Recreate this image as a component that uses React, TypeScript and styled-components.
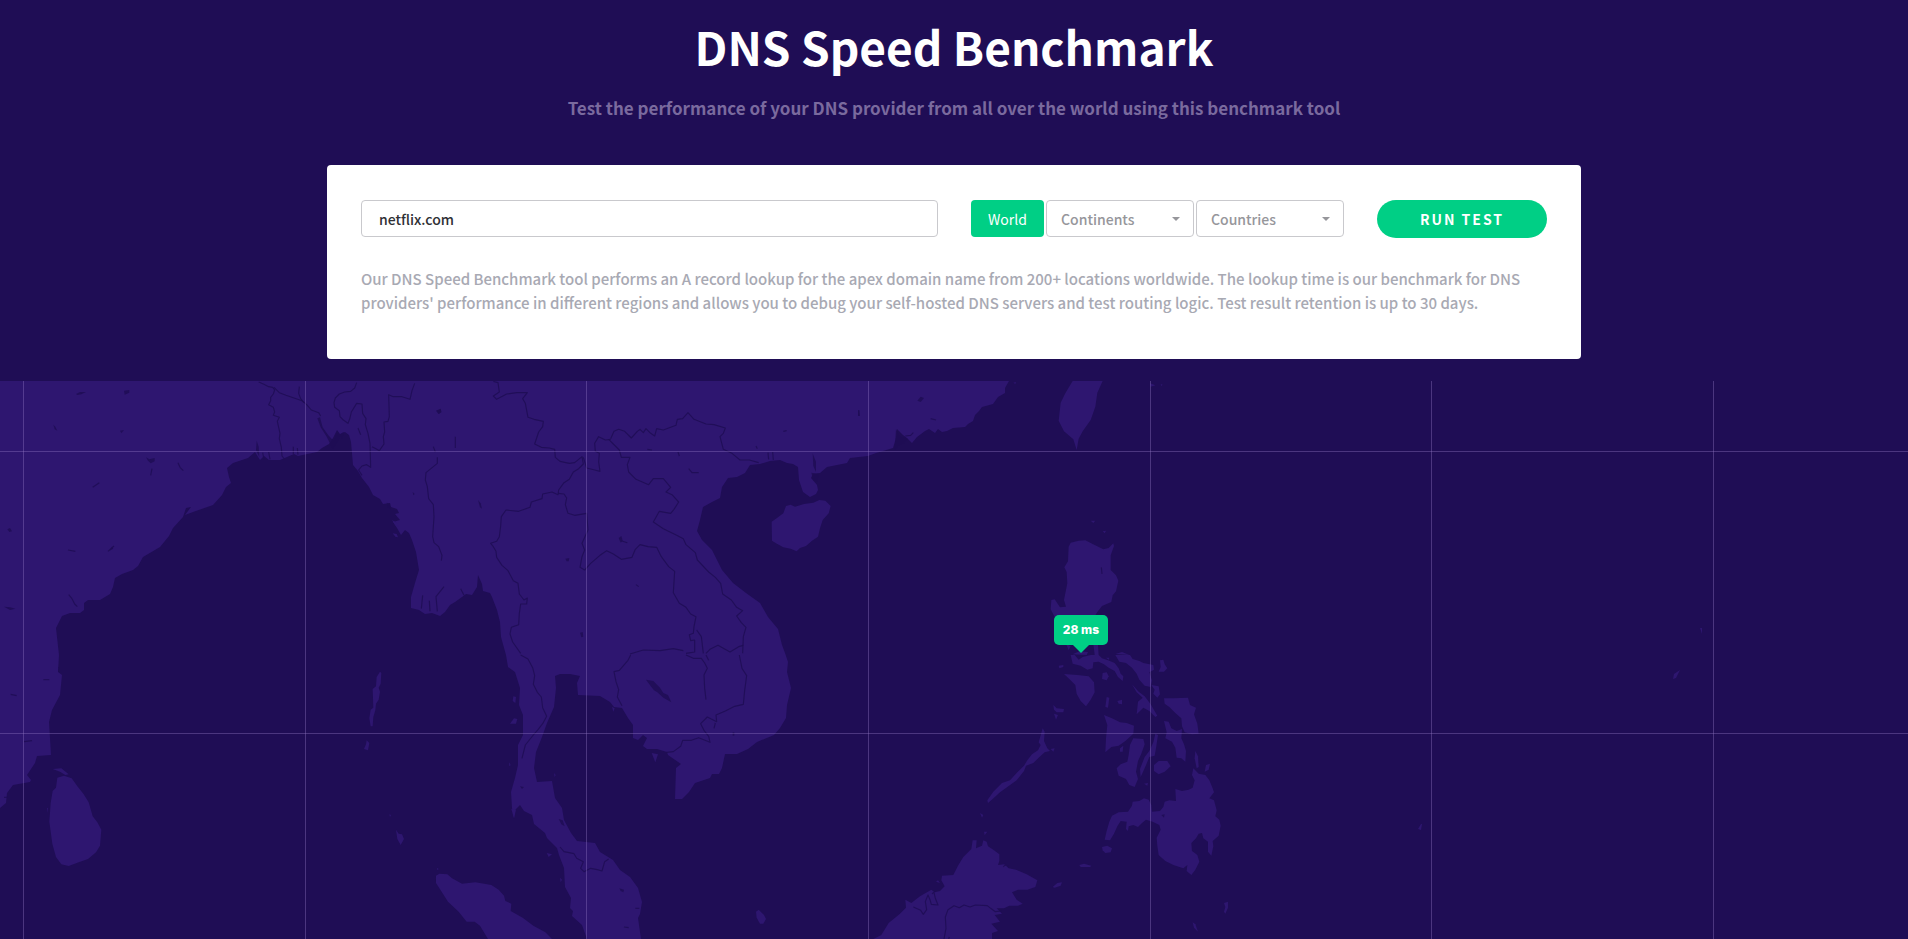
import React from "react";
import styled, { createGlobalStyle } from "styled-components";

const color = {
  sea: "#1f0d55",
  land: "#2e1670",
  grid: "rgba(146, 122, 196, 0.38)",
  green: "#00cf85",
  line: "#c9c9cd",
  muted: "#a8a9b3",
};

const sans = '"Noto Sans CJK SC", "Noto Sans", sans-serif';

const GlobalStyle = createGlobalStyle`
  *, *::before, *::after { box-sizing: border-box; }
  body {
    margin: 0;
    background: ${color.sea};
    font-family: ${sans};
  }
`;

const Page = styled.div`
  display: flex;
  flex-direction: column;
  min-height: 100vh;
  background: ${color.sea};
`;

const Header = styled.header`
  padding: 16px 24px 43px;
  text-align: center;
`;

const Title = styled.h1`
  margin: 0;
  color: #fff;
  font-size: 46px;
  line-height: 60px;
  font-weight: 700;
`;

const Subtitle = styled.p`
  margin: 18px 0 0;
  color: #7a6a9e;
  font-size: 17px;
  line-height: 28px;
  font-weight: 700;
`;

const Card = styled.form`
  width: calc(100% - 48px);
  max-width: 1254px;
  margin: 0 auto 22px;
  padding: 35px 34px 44px;
  border-radius: 4px;
  background: #fff;
`;

const Controls = styled.div`
  display: flex;
  flex-wrap: wrap;
  align-items: flex-start;
  gap: 33px;
`;

const DomainInput = styled.input`
  flex: 1 1 240px;
  min-width: 0;
  height: 37px;
  padding: 0 17px;
  border: 1px solid ${color.line};
  border-radius: 4px;
  background: #fff;
  color: #2f3035;
  font-family: inherit;
  font-size: 14px;
  font-weight: 500;
`;

const Scope = styled.div`
  display: flex;
  gap: 2px;
`;

const ScopeButton = styled.button`
  width: 73px;
  height: 37px;
  padding: 0;
  border: 0;
  border-radius: 4px;
  background: ${color.green};
  color: #fff;
  font-family: inherit;
  font-size: 14px;
  font-weight: 400;
`;

const SelectBox = styled.div`
  position: relative;
  width: 148px;
`;

const Select = styled.select`
  appearance: none;
  width: 100%;
  height: 37px;
  padding: 0 30px 0 14px;
  border: 1px solid ${color.line};
  border-radius: 4px;
  background: #fff;
  color: #96969b;
  font-family: inherit;
  font-size: 14px;
  font-weight: 500;
`;

const Caret = styled.svg`
  position: absolute;
  top: 17px;
  right: 14px;
  width: 8px;
  height: 4px;
  fill: #96969b;
  pointer-events: none;
`;

const RunButton = styled.button`
  width: 170px;
  height: 38px;
  padding: 0;
  border: 0;
  border-radius: 19px;
  background: ${color.green};
  color: #fff;
  font-family: inherit;
  font-size: 14px;
  font-weight: 700;
  letter-spacing: 2px;
`;

const Note = styled.p`
  margin: 29px 0 0;
  color: ${color.muted};
  font-size: 15px;
  line-height: 24px;
  font-weight: 500;
`;

const MapArea = styled.main`
  position: relative;
  flex: 1 0 auto;
  min-height: 558px;
  overflow: hidden;
`;

const MapSvg = styled.svg`
  position: absolute;
  inset: 0;
  width: 100%;
  height: 100%;
`;

const Pin = styled.div`
  position: absolute;
  left: calc(50% + 127px);
  top: 234px;
  width: 54px;
  height: 30px;
  transform: translateX(-50%);
  border-radius: 5px;
  background: ${color.green};
  color: #fff;
  font-family: Inter, sans-serif;
  font-size: 12px;
  line-height: 30px;
  font-weight: 800;
  text-align: center;

  &::after {
    content: "";
    position: absolute;
    left: 50%;
    top: 100%;
    margin-left: -8px;
    border: 8px solid transparent;
    border-bottom: 0;
    border-top-color: ${color.green};
  }
`;

const mainland =
  "0,381 1009,381 1005,388 1005,393 998,397 993,404 982,407 979,411 975,415 973,421 968,424 965,427 953,428 947,431 942,432 938,429 935,433 929,429 925,431 917,437 912,443 907,438 903,435 897,429 896,438 893,448 883,451 876,453 868,456 850,458 847,463 827,467 820,473 813,474 811,478 817,485 818,490 816,494 810,497 803,492 799,480 798,467 793,464 787,463 780,460 770,461 760,464 750,465 745,473 737,477 728,478 722,487 720,498 712,502 703,507 700,520 697,531 702,540 712,550 718,562 722,570 733,583 746,593 760,603 768,617 778,629 782,645 785,653 788,662 787,672 791,688 787,705 786,718 780,728 774,735 757,742 748,749 737,754 725,754 722,768 719,774 712,774 710,778 695,783 689,792 682,799 675,799 676,768 681,764 668,755 667,752 657,749 647,749 643,746 647,738 643,735 638,740 633,738 633,725 628,718 622,708 614,707 610,702 600,696 578,695 577,683 580,676 570,674 560,674 555,676 556,688 554,707 547,723 542,737 536,752 534,768 537,782 552,781 555,798 562,808 564,820 571,833 577,841 595,843 600,852 613,860 620,870 630,877 638,888 642,902 640,914 638,918 641,939 587,939 582,925 572,916 573,911 570,908 571,898 565,887 564,868 559,855 557,848 547,838 545,833 534,824 532,815 524,811 520,805 515,810 514,818 512,808 511,792 515,778 518,765 518,745 523,735 523,715 519,705 520,688 515,672 508,667 506,655 501,637 500,622 497,610 492,597 490,593 483,591 482,584 478,575 477,587 472,595 466,594 462,597 455,602 450,605 445,612 440,616 432,613 425,614 419,610 411,608 411,597 415,583 419,570 416,552 412,540 409,533 405,530 401,535 397,528 393,522 400,520 395,514 399,513 397,509 391,507 390,503 383,504 380,499 373,495 369,487 362,478 358,471 353,465 351,442 349,435 345,432 340,434 337,430 333,438 329,444 322,448 317,452 298,456 294,454 280,460 269,460 264,456 260,460 255,452 248,458 239,461 233,463 227,468 229,477 231,483 226,487 222,495 213,505 193,512 185,515 191,507 186,508 183,517 173,528 169,536 160,547 143,557 138,566 133,570 122,574 115,578 113,587 110,594 100,600 88,600 84,603 84,610 80,613 70,613 62,616 56,628 59,655 58,672 62,675 60,695 52,710 49,722 51,755 37,756 35,763 27,775 31,780 30,782 13,785 7,793 6,803 0,808";

type Tile = { x: number; y: number; land: string[]; water?: string[]; borders: string[] };

/* Shapes are stored at three times map scale, relative to each tile's origin. */
const tiles: Tile[] = [
  {
    x: 0,
    y: 370,
    land: ["1178,490 1190,492 1194,502 1186,500", "1176,450 1190,458 1196,470 1186,466"],
    water: [
      "228,72 240,66 258,66 244,73 232,75",
      "372,62 388,60 388,68 374,74",
      "438,262 448,268 464,264 464,274 452,280 444,272",
      "1310,122 1322,118 1324,126 1316,132",
      "22,478 30,474 36,484 28,486",
      "12,710 30,712 46,716 30,720",
      "160,164 166,170 172,182 164,178",
      "360,182 372,180 364,190",
      "328,542 336,530 340,536",
      "952,145 960,142 968,172 985,196 1002,214 1010,190 1022,196 1012,216 998,236 980,200 962,172",
      "770,212 776,230 778,262 768,240",
      "1024,190 1032,186 1026,206",
      "1160,398 1168,402 1172,418 1164,412",
    ],
    borders: [
      "776,36 790,42 806,50 818,52 824,60 820,72 812,82 812,92 806,104 820,112 824,126 820,136 838,142 832,154 840,190 838,206 844,232 846,258 854,268",
      "822,52 838,68 858,76 882,84 906,92 920,104 934,120 956,128 962,138",
      "898,50 896,70 902,86 912,98",
      "1070,38 1064,54 1052,64 1034,66 1018,72 1006,84 1002,98 1004,112 1018,122 1020,140 1030,150 1044,160 1050,144 1054,126 1070,100 1086,102 1088,130 1098,146 1096,164 1104,190 1110,220 1112,292 1100,284 1086,288 1076,300 1086,316",
      "1244,40 1236,62 1230,88 1206,80 1180,80 1166,74 1168,140 1164,154 1152,156 1154,186 1150,200 1152,222 1138,242 1128,236 1116,230",
      "1312,262 1312,280 1290,298 1278,308 1276,330 1282,350 1286,386 1300,404 1302,440 1298,500 1302,518 1316,530 1326,556 1324,572",
      "1366,200 1366,234",
      "1300,230 1306,246",
      "1074,174 1082,194",
      "534,278 540,292 550,302",
      "206,674 216,686 224,702 232,710",
      "204,540 226,544",
      "324,544 342,528",
      "278,352 298,338",
      "456,296 452,316",
      "788,248 792,268",
      "806,246 810,268",
      "880,230 880,252",
      "892,234 894,254",
      "1268,676 1264,716",
      "1288,692 1290,724",
      "1332,650 1308,680 1312,724",
      "1382,656 1392,676",
    ],
  },
  {
    x: 400,
    y: 370,
    land: [
      "1115,455 1130,445 1150,430 1158,408 1172,404 1185,410 1212,402 1240,398 1258,390 1276,392 1292,408 1286,430 1268,450 1260,475 1254,500 1236,512 1218,528 1200,534 1190,544 1172,536 1150,532 1128,520 1116,512",
    ],
    water: [
      "108,122 122,116 124,126 116,132",
      "496,566 508,564 506,574 500,574",
      "656,504 664,498 668,512 662,518",
      "234,390 242,400 246,416 240,412",
      "38,366 44,372 40,376",
      "540,788 548,786 550,800 544,802",
      "1234,308 1256,312 1252,336 1240,330",
      "1238,250 1248,276 1248,306 1240,288",
    ],
    borders: [
      "280,34 294,38 298,66 280,78 290,88 320,72 350,68 382,68 368,86 376,100 384,142 402,148 430,154 428,170 416,186 404,222 424,232 448,234 464,238 466,262 480,274 508,280 524,278 546,260 550,282 536,296 520,306 508,328 492,338 476,360 474,374 456,366 428,372 426,386 394,396 390,412 356,424 318,420 304,440 302,468 298,500 290,514 272,520 280,530 288,544 290,562 306,586 324,602 340,632 354,640 358,672 372,690 382,684 380,702 362,702 358,730 356,764 334,772 330,792 338,816 362,850",
      "550,262 560,294 584,300 600,304 596,276 598,250 586,244 584,220 596,200 616,210 632,208",
      "632,206 642,184 656,178 674,184 694,204 712,184 720,178 730,188 738,176 752,190 764,198 770,176 790,180 828,166 832,148 848,146 864,128 882,148 918,162 942,164 976,174 970,190 960,200 970,238 996,250 1020,270 1048,270 1076,278",
      "626,208 640,222 658,240 664,262 690,262 682,284 686,306 708,328 746,344 760,326 790,326 812,352 798,366 816,374 836,396 822,418 812,430 778,424 760,456 790,476 830,496 850,506 858,524 886,548 892,570 926,606 946,622 962,640 968,672 994,690 1010,712 1028,722 1010,738 1024,758 1038,772 1030,800 1028,850",
      "474,370 492,372 500,384 496,404 504,430 524,436 560,430 564,480 546,520 554,540 546,560 540,592 554,600 572,580 600,556 620,542 640,552 664,568 696,562 706,538 720,524 744,530 770,532 784,560 806,590 824,604 820,668 838,700 858,712 872,732 888,740 882,770 880,790 868,794 872,812 884,810 884,846 858,850",
      "690,852 730,840 780,842 820,836 850,842",
      "918,850 930,838 954,826 990,846 1016,830 1030,826",
      "890,780 904,800 910,850",
      "866,296 876,308 896,308",
      "834,246 838,258",
      "1104,248 1106,268",
      "1118,246 1120,270",
      "742,238 756,240",
      "1376,122 1376,138",
      "664,512 682,518",
      "708,644 716,650",
      "1150,184 1160,182",
      "1068,228 1072,236",
    ],
  },
  {
    x: 800,
    y: 370,
    land: [
      "818,33 908,33 892,68 886,110 872,150 848,184 836,206 830,240 820,208 792,184 776,152 782,98 796,70",
      "812,518 836,512 856,511 878,522 910,538 926,534 940,520 942,528 932,556 932,600 948,616 955,632 948,664 938,676 934,696 906,708 892,726 880,745 766,745 752,718 754,690 764,688 780,712 798,710 792,690 802,640 800,606 793,592 804,574 806,530",
      "872,452 886,452 880,459",
      "908,484 918,482 914,490",
      "1050,40 1066,46 1052,50",
      "1082,42 1088,44 1084,48",
      "640,38 648,36 646,42",
      "798,822 812,828 806,840",
      "880,822 894,824 896,855 884,855",
      "946,852 966,846 988,855",
      "818,853 838,844 864,846 860,855",
    ],
    water: ["352,92 362,80 372,84 362,96", "288,178 300,200 322,206 312,220 296,226 284,240"],
    borders: ["316,198 332,196 340,188", "176,120 178,138", "392,146 408,150", "904,592 906,612"],
  },
  {
    x: 0,
    y: 655,
    land: [
      "172,368 192,362 215,370 232,394 250,416 266,442 278,484 292,502 304,524 300,572 288,592 264,612 236,622 206,633 184,628 168,606 157,566 148,500 152,444 158,408 168,398",
      "158,342 184,340 206,358 196,360 180,350",
      "1140,50 1144,54 1142,86 1136,98 1140,110 1136,134 1128,146 1126,166 1120,186 1118,214 1112,214 1108,190 1112,164 1120,158 1118,102 1128,94 1130,66",
      "1100,256 1108,264 1104,286 1092,282 1098,268",
      "1168,478 1173,480 1170,486",
      "1188,524 1196,536 1206,538 1212,552 1202,570 1192,552",
      "141,458 144,460 144,474",
    ],
    borders: ["72,260 96,257", "130,74 148,74", "32,118 50,122", "176,36 178,50", "12,427 22,427"],
  },
  {
    x: 400,
    y: 655,
    land: [
      "108,662 118,656 142,658 156,670 186,686 226,682 274,690 296,704 312,722 316,738 334,746 332,768 368,788 400,812 436,832 456,852 264,852 240,812 224,800 200,800 176,770 144,740 122,706 108,684",
      "340,124 348,126 346,144 338,138",
      "342,190 352,192 348,206 330,206",
      "334,462 348,464 342,490",
      "755,294 774,298 766,322",
      "440,594 456,598 446,606",
      "480,668 486,674 482,682",
      "636,156 644,160 640,170",
      "462,354 467,360 464,366",
      "327,322 332,330 328,334",
      "111,638 116,642 112,646",
      "1068,770 1076,764 1092,780 1098,792 1090,806 1080,806 1070,788",
    ],
    water: [
      "738,74 760,78 780,98 790,114 804,120 814,142 790,128 772,112 762,106 748,88",
      "658,700 672,704 670,712 662,708",
      "476,492 488,496 494,514 484,508",
      "360,394 372,396 366,402",
      "998,232 1003,232 1003,242 998,242",
    ],
    borders: [
      "362,0 384,12 398,38 404,62 400,88 412,112 424,126 428,158 440,184 428,206 414,224 400,240 376,270 366,310",
      "692,0 684,16 658,46 642,50 648,80 656,104 652,126 666,152",
      "858,0 880,10 904,10 914,24 922,40 912,60 914,100 918,134",
      "1018,0 1026,40 1040,62 1034,106 1030,148 1004,154 976,168 948,180 950,200 922,186 902,206 912,226 926,244 930,262 896,248 874,256 848,256 842,274 820,290 800,292",
      "480,576 492,590 522,596 530,610 550,620 542,640 552,650 572,640 592,644 606,648 614,620 626,612",
      "946,204 942,220",
      "672,816 686,818",
      "706,760 718,760",
      "918,0 926,16",
    ],
  },
  {
    x: 800,
    y: 655,
    land: [
      "812,0 824,0 836,14 848,6 872,0 896,0 906,10 924,16 944,24 956,40 962,56 970,64 968,78 954,66 944,48 926,38 912,28 896,20 880,22 878,40 862,44 842,32 818,26",
      "946,0 990,0 998,12 1018,18 1030,24 1060,30 1062,44 1048,52 1056,76 1052,96 1034,92 1018,74 1010,56 996,38 978,24 958,20",
      "918,8 928,8 926,14",
      "1080,16 1090,14 1094,28 1102,40 1092,50 1076,50 1082,36",
      "776,32 790,30 790,36 778,40",
      "908,54 920,52 926,64 920,76 906,72",
      "792,57 832,60 866,64 882,82 884,112 872,134 858,154 842,138 830,116 826,90 808,72",
      "760,150 770,160 792,162 790,172 770,172 762,164",
      "762,176 774,180 768,194",
      "920,126 928,128 924,158 916,156",
      "952,138 966,134 966,148 956,146",
      "996,88 1016,110 1034,124 1052,148 1072,182 1066,186 1048,168 1030,158 1020,168 1010,178 1014,140 1028,128 1010,112",
      "1054,90 1076,94 1080,118 1072,128 1060,116 1064,104",
      "1092,130 1120,130 1164,128 1170,150 1188,158 1182,178 1192,206 1196,236 1176,238 1154,232 1146,214 1144,190 1126,174 1108,156 1094,146",
      "912,180 936,190 960,202 980,204 1002,212 1000,236 976,258 956,272 934,276 916,292 918,250 922,210",
      "960,280 970,272 968,290 960,290",
      "1092,198 1106,200 1114,220 1130,228 1146,222 1144,250 1152,268 1158,288 1156,320 1144,310 1130,308 1126,278 1116,260 1096,250 1100,232",
      "1000,250 1030,252 1034,268 1024,296 1014,318 1008,350 1014,372 1004,396 988,390 978,372 956,362 950,340 962,328 982,320 986,300 990,270",
      "1066,236 1074,240 1068,280 1064,302 1048,306 1034,340 1022,366 1020,342 1034,306 1048,288 1060,262",
      "1062,330 1076,318 1102,318 1112,334 1094,350 1076,358 1062,348",
      "1186,288 1194,304 1196,336 1190,340 1184,310",
      "1218,330 1230,326 1226,344 1214,350",
      "1180,340 1196,356 1216,360 1228,376 1238,400 1242,412 1228,430 1242,436 1250,466 1246,484 1258,494 1262,512 1256,542 1238,558 1240,574 1234,602 1224,590 1224,560 1210,550 1206,534 1196,536 1188,550 1174,564 1176,588 1192,600 1198,620 1186,644 1174,660 1160,648 1162,630 1150,640 1120,630 1096,618 1076,600 1072,572 1070,548 1082,524 1078,510 1058,500 1038,494 1026,504 1014,516 1000,510 986,514 984,528 978,522 980,500 962,498 952,514 942,536 930,556 914,554 920,528 928,500 936,482 956,472 984,470 996,452 998,440 1018,438 1032,430 1046,434 1054,450 1056,470 1080,468 1090,456 1094,440 1108,436 1128,438 1126,402 1146,408 1166,404 1178,398 1184,376 1176,360",
      "906,576 922,572 936,580 932,592 916,594 908,586",
      "838,630 852,626 874,632 870,636 842,636",
      "758,696 772,684 786,682 782,692 764,698",
      "728,220 734,230 732,258 742,280 750,288 734,292 716,308 700,324 678,332 672,348 650,376 622,396 600,412 578,432 564,444 562,436 580,410 606,384 630,376 652,352 672,332 682,316 696,298 714,286 722,270 716,262",
      "752,282 764,280 760,290",
      "540,474 550,480 546,488",
      "552,530 562,530 554,540",
      "518,556 530,556 528,580 546,572 550,556 560,560 564,574 582,586 598,598 598,618 594,630 614,628 626,640 648,644 680,658 712,676 706,696 682,704 654,704 636,712 650,734 668,746 654,752 628,752 612,760 590,760 606,776 584,780 600,800 574,806 594,828 576,834 576,852 220,852 244,840 266,804 300,776 318,758 316,734 334,744 360,724 394,704 404,712 420,708 434,694 424,676 426,662 460,660 474,632 490,606 514,582",
      "1272,744 1284,740 1284,758 1276,776 1272,770 1276,756",
      "1178,802 1186,808 1194,830 1182,818",
      "1032,386 1044,384 1042,392",
      "408,680 414,676 420,684",
    ],
    water: ["1084,480 1094,478 1092,488"],
    borders: [
      "432,852 438,820 436,786 444,764 462,752 478,758 492,750 510,756 526,750 562,752 572,760 586,770 604,768",
      "340,756 362,766 370,778 380,764 376,740 384,720 390,734 394,748 414,750 406,730 402,712 396,716",
      "446,852 448,846",
      "610,636 616,628 626,636",
    ],
  },
];

const farIslands = [
  "1680,670 1676,678 1673,679 1674,674",
  "1700,628 1702,628 1702,634",
  "1421,824 1422,824 1421,830 1418,829",
];

const meridians = [23, 305, 586, 868, 1150, 1431, 1713];
const parallels = [451, 733];

function WorldMap() {
  return (
    <MapSvg viewBox="0 381 1908 558" preserveAspectRatio="xMidYMin slice" role="img" aria-label="Map of Southeast Asia">
      <polygon points={mainland} fill={color.land} />
      {tiles.map((t) => (
        <g key={`${t.x}-${t.y}`} transform={`translate(${t.x} ${t.y}) scale(0.33333)`}>
          {t.land.map((p) => (
            <polygon key={p} points={p} fill={color.land} />
          ))}
          {t.water?.map((p) => (
            <polygon key={p} points={p} fill={color.sea} opacity="0.85" />
          ))}
          {t.borders.map((p) => (
            <polyline key={p} points={p} fill="none" stroke={color.sea} strokeWidth="3.4" strokeLinejoin="round" opacity="0.9" />
          ))}
        </g>
      ))}
      {farIslands.map((p) => (
        <polygon key={p} points={p} fill={color.land} />
      ))}
      <g fill={color.grid}>
        {meridians.map((x) => (
          <rect key={x} x={x} y="381" width="1" height="558" />
        ))}
        {parallels.map((y) => (
          <rect key={y} x="0" y={y} width="1908" height="1" />
        ))}
      </g>
    </MapSvg>
  );
}

function ScopeSelect({ label }: { label: string }) {
  return (
    <SelectBox>
      <Select aria-label={label} defaultValue="">
        <option value="">{label}</option>
      </Select>
      <Caret viewBox="0 0 8 4" aria-hidden="true">
        <path d="M0 0h8L4 4z" />
      </Caret>
    </SelectBox>
  );
}

export default function App() {
  return (
    <Page>
      <GlobalStyle />
      <Header>
        <Title>DNS Speed Benchmark</Title>
        <Subtitle>
          Test the performance of your DNS provider from all over the world using this benchmark tool
        </Subtitle>
      </Header>
      <Card onSubmit={(e) => e.preventDefault()}>
        <Controls>
          <DomainInput type="text" aria-label="Domain name" defaultValue="netflix.com" />
          <Scope>
            <ScopeButton type="button">World</ScopeButton>
            <ScopeSelect label="Continents" />
            <ScopeSelect label="Countries" />
          </Scope>
          <RunButton type="submit">RUN TEST</RunButton>
        </Controls>
        <Note>
          Our DNS Speed Benchmark tool performs an A record lookup for the apex domain name from 200+ locations
          worldwide. The lookup time is our benchmark for DNS providers' performance in different regions and allows
          you to debug your self-hosted DNS servers and test routing logic. Test result retention is up to 30 days.
        </Note>
      </Card>
      <MapArea>
        <WorldMap />
        <Pin>28 ms</Pin>
      </MapArea>
    </Page>
  );
}
